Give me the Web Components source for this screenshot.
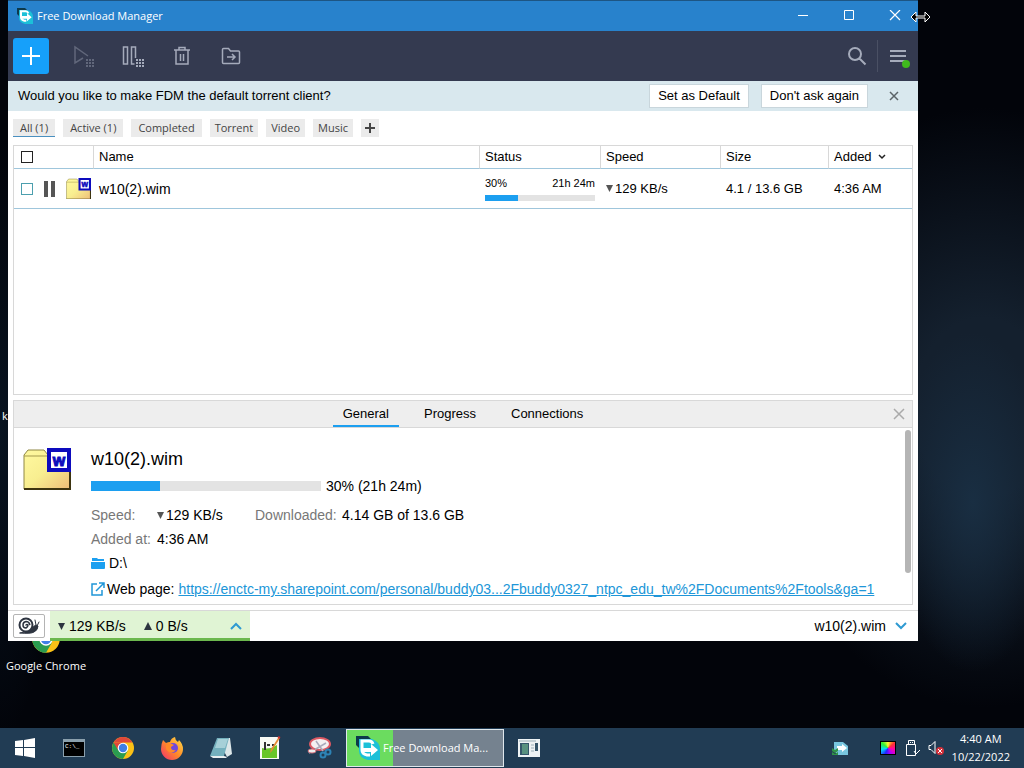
<!DOCTYPE html>
<html lang="en">
<head>
<meta charset="utf-8">
<meta name="viewport" content="width=device-width, initial-scale=1">
<title>Free Download Manager</title>
<style>
  body {
    display: flex;
    flex-direction: column;
    min-height: 100vh;
    margin: 0;
    background: #02040a;
    font: 13px/20px "Liberation Sans", Arial, sans-serif;
    color: #000;
  }
</style>
</head>
<body>
  <desk-top>
    <desktop-icon slot="icons" label="Google Chrome"></desktop-icon>
    <app-window>
      <title-bar>Free Download Manager</title-bar>
      <tool-bar></tool-bar>
      <app-banner>Would you like to make FDM the default torrent client?</app-banner>
      <filter-tabs></filter-tabs>
      <download-list></download-list>
      <details-panel></details-panel>
      <status-bar></status-bar>
    </app-window>
  </desk-top>
  <task-bar></task-bar>

<script>
const UI_FONT = '"Open Sans", "Noto Sans", sans-serif'

const base = `
  <style>
    *, :host { box-sizing: border-box; }
    button {
      display: inline-flex;
      align-items: center;
      justify-content: center;
      margin: 0;
      padding: 0;
      border: none;
      background: none;
      font: inherit;
      color: inherit;
    }
    svg { display: block; flex: none; }
    .arrow { display: inline-block; margin-right: 2px; vertical-align: 1px; fill: #555; }
    input[type=checkbox] {
      appearance: none;
      width: 12px;
      height: 12px;
      margin: 0;
      border: 1px solid #222;
      background: #fff;
    }
  </style>
`

const chrome = `
  <svg width="24" height="24" viewBox="0 0 24 24" aria-hidden="true">
    <circle cx="12" cy="12" r="11" fill="#fbc116"/>
    <path d="M12 12L2.500 6.500A11 11 0 0 0 12 23l4.700-8.300z" fill="#2a9c50"/>
    <path d="M12 6.500h9.500L17 14z" fill="#fbc116"/>
    <path d="M2.500 6.500A11 11 0 0 1 21.500 6.500H12z" fill="#e0483a"/>
    <path d="M2.500 6.500L7 14l5-7.500z" fill="#e0483a"/>
    <circle cx="12" cy="12" r="5.300" fill="#fff"/>
    <circle cx="12" cy="12" r="4.200" fill="#3f7fe6"/>
  </svg>
`

const fdm = size => `
  <svg width="${size}" height="${size}" viewBox="0 0 24 24" aria-hidden="true">
    <path d="M0 0h12l5 5v10H6l-6-6z" fill="#0d3a4c"/>
    <path d="M3 3h13q8 3 8 10v11H12q-9-2-9-9z" fill="#1cc0d8"/>
    <path d="M17 8q-1-3-4-3H6v9q0 4 5 5h3" fill="none" stroke="#fff" stroke-width="3"/>
    <path d="M7 12h8V8l7 6-7 6v-4H7z" fill="#fff"/>
  </svg>
`

const down = '<svg class="arrow" width="7" height="7" aria-hidden="true"><path d="M0 0h7L3.500 7z"/></svg>'
const up = '<svg class="arrow" width="8" height="8" aria-hidden="true"><path d="M0 8h8L4 0z"/></svg>'

class BaseElement extends HTMLElement {
  constructor() {
    super()
    this.attachShadow({ mode: 'open' })
    this.shadowRoot.innerHTML = base + this.render()
  }
}

customElements.define('desk-top', class extends BaseElement {
  render() {
    return `
      <style>
        :host {
          display: block;
          position: relative;
          flex: 1;
          min-height: 680px;
          overflow: hidden;
          background:
            radial-gradient(ellipse 80px 170px at 95% 69%, #192e42, transparent),
            radial-gradient(ellipse 230px 300px at 96% 56%, #14202e 30%, transparent),
            radial-gradient(ellipse 60px 300px at 0 60%, #081320, transparent),
            #02040a;
        }
        .cut {
          position: absolute;
          left: 2px;
          top: 408px;
          color: #fff;
          font: 11px/16px ${UI_FONT};
        }
        .cursor { position: absolute; right: 93px; top: 11px; }
      </style>
      <span class="cut">k</span>
      <slot name="icons"></slot>
      <slot></slot>
      <svg class="cursor" width="21" height="12" viewBox="0 0 21 12" aria-hidden="true">
        <path d="M1 6l5-5v4h9V1l5 5-5 5V7H6v4z" fill="#000" stroke="#fff"/>
      </svg>
    `
  }
})

customElements.define('desktop-icon', class extends BaseElement {
  render() {
    return `
      <style>
        :host {
          position: absolute;
          left: 0;
          bottom: 54px;
          display: flex;
          flex-direction: column;
          align-items: center;
          width: 92px;
          color: #fff;
          font: 11px/16px ${UI_FONT};
        }
        svg { width: 30px; height: 30px; margin-bottom: 4px; }
      </style>
      ${chrome}
      <span>${this.getAttribute('label')}</span>
    `
  }
})

customElements.define('app-window', class extends BaseElement {
  render() {
    return `
      <style>
        :host {
          position: absolute;
          inset: 0 106px 87px 8px;
          display: flex;
          flex-direction: column;
          background: #fff;
        }
      </style>
      <slot></slot>
    `
  }
})

customElements.define('title-bar', class extends BaseElement {
  render() {
    return `
      <style>
        :host {
          display: flex;
          align-items: center;
          height: 31px;
          padding-left: 9px;
          border-top: 1px solid #1d5583;
          background: #2882cc;
          color: #fff;
          font: 11px/20px ${UI_FONT};
        }
        .title { flex: 1; margin-left: 4px; }
        button { width: 46px; height: 30px; }
      </style>
      ${fdm(16)}
      <span class="title"><slot></slot></span>
      <button aria-label="Minimize"><svg width="12" height="12"><path d="M1 5.500h10" stroke="#fff"/></svg></button>
      <button aria-label="Maximize"><svg width="12" height="12"><path d="M1.500 .5h9v9h-9z" fill="none" stroke="#fff"/></svg></button>
      <button aria-label="Close"><svg width="12" height="12"><path d="M1 0l10 10M11 0L1 10" stroke="#fff" stroke-width="1.200"/></svg></button>
    `
  }
})

customElements.define('tool-bar', class extends BaseElement {
  render() {
    const dots = (x, y) => `<path d="M${x} ${y}h8M${x} ${y + 3}h8M${x} ${y + 6}h8" stroke-width="2" stroke-dasharray="2 1"/>`
    return `
      <style>
        :host {
          display: flex;
          align-items: center;
          height: 50px;
          padding-left: 5px;
          background: #343a50;
        }
        button { width: 49px; height: 36px; }
        svg { fill: none; stroke: #a5abbb; stroke-width: 1.500; }
        .add { width: 36px; margin-right: 10px; border-radius: 3px; background: #16a0fa; }
        .add svg { stroke: #fff; stroke-width: 2; }
        .off { opacity: .4; }
        .space { flex: 1; }
        .narrow { width: 40px; }
        .line { width: 1px; height: 32px; background: #4a5064; }
      </style>
      <button class="add" aria-label="Add download"><svg width="20" height="20"><path d="M10 1v18M1 10h18"/></svg></button>
      <button class="off" aria-label="Start all" disabled>
        <svg width="24" height="24"><path d="M11 14l-8 5V3l13 9"/>${dots(14, 16)}</svg>
      </button>
      <button aria-label="Pause all">
        <svg width="24" height="24"><path d="M2.500 3h4v17h-4zM14.500 14V3h-4v17h3"/>${dots(15, 16)}</svg>
      </button>
      <button aria-label="Delete">
        <svg width="18" height="20"><path d="M1 4h16M6 4V1.500h6V4M3 4v14h12V4M7.500 8v7M10.500 8v7"/></svg>
      </button>
      <button aria-label="Move to">
        <svg width="20" height="18"><path d="M1.500 15.500v-13q0-1 1-1h5l2 2.500h8q1 0 1 1v10.500q0 1-1 1h-15q-1 0-1-1zM6 10h8M11 7l3 3-3 3"/></svg>
      </button>
      <span class="space"></span>
      <button class="narrow" aria-label="Search">
        <svg width="20" height="20"><path d="M14 8A6 6 0 1 1 2 8a6 6 0 0 1 12 0zM12.500 12.500l6 6" stroke-width="2"/></svg>
      </button>
      <span class="line"></span>
      <button class="narrow" aria-label="Menu">
        <svg width="24" height="24"><path d="M4 7h16M4 12h16M4 17h16" stroke-width="2"/><circle cx="20" cy="20" r="4" fill="#3fb91c" stroke="none"/></svg>
      </button>
    `
  }
})

customElements.define('app-banner', class extends BaseElement {
  render() {
    return `
      <style>
        :host {
          display: flex;
          align-items: center;
          gap: 12px;
          height: 30px;
          padding-left: 10px;
          background: #d9e8ee;
        }
        .text { flex: 1; }
        button { height: 24px; padding: 0 8px; border: 1px solid #c9d6dc; background: #fff; }
        .close { width: 48px; margin-left: -10px; border: none; background: none; }
      </style>
      <span class="text"><slot></slot></span>
      <button>Set as Default</button>
      <button>Don't ask again</button>
      <button class="close" aria-label="Dismiss"><svg width="10" height="10"><path d="M1 1l8 8M9 1L1 9" stroke="#5c6468" stroke-width="1.500"/></svg></button>
    `
  }
})

customElements.define('filter-tabs', class extends BaseElement {
  render() {
    return `
      <style>
        :host {
          display: flex;
          gap: 8px;
          padding: 8px 5px;
          font: 11px/16px ${UI_FONT};
          color: #444;
        }
        button { height: 18px; padding: 0 7px; background: #ebebeb; }
        .tag { padding: 0 5px; }
        .tag svg { margin: 0 -1px; }
        .active { border-bottom: 1px solid #4a90c0; }
      </style>
      <button class="active">All (1)</button>
      <button>Active (1)</button>
      <button>Completed</button>
      <button class="tag">Torrent</button>
      <button class="tag">Video</button>
      <button class="tag">Music</button>
      <button class="tag" aria-label="Add tag"><svg width="10" height="10"><path d="M5 0v10M0 5h10" stroke="#444" stroke-width="2"/></svg></button>
    `
  }
})

customElements.define('progress-line', class extends BaseElement {
  render() {
    return `
      <style>
        :host { display: block; height: 6px; background: #e3e3e3; }
        div { width: ${this.getAttribute('value')}%; height: 100%; background: #1c9ff0; }
      </style>
      <div></div>
    `
  }
})

customElements.define('file-icon', class extends BaseElement {
  render() {
    return `
      <style>
        :host { display: block; width: 25px; }
        svg { width: 100%; height: auto; }
      </style>
      <svg viewBox="0 0 48 42" aria-hidden="true">
        <defs>
          <linearGradient id="paper" x1="0" y1="0" x2="1" y2="1">
            <stop offset="0" stop-color="#fff9a0"/>
            <stop offset=".5" stop-color="#f8ee90"/>
            <stop offset="1" stop-color="#eebd78"/>
          </linearGradient>
        </defs>
        <path d="M1 41V7l4-5h16l4 5h22v34z" fill="url(#paper)" stroke="#8f8744"/>
        <path d="M1 8h24" stroke="#a59b4e"/>
        <path d="M1 41h46V8" fill="none" stroke="#3d3410" stroke-width="2"/>
        <path d="M26 2h20v20H26z" fill="#fff" stroke="#0d0bbd" stroke-width="4"/>
        <text x="36" y="18" text-anchor="middle" font-family="Liberation Sans" font-weight="bold" font-size="16" fill="#0d0bbd" stroke="#0d0bbd">w</text>
      </svg>
    `
  }
})

customElements.define('download-list', class extends BaseElement {
  render() {
    return `
      <style>
        :host {
          display: block;
          flex: 1;
          min-height: 64px;
          margin: 0 5px 5px;
          border: 1px solid #d8d8d8;
        }
        table { width: 100%; table-layout: fixed; border-spacing: 0; }
        th {
          height: 23px;
          padding: 0 5px;
          border-left: 1px solid #d8d8d8;
          border-bottom: 1px solid #9fc6dc;
          font-weight: normal;
          text-align: left;
        }
        td { height: 40px; padding: 0 5px 0 6px; border-bottom: 1px solid #9fc6dc; }
        th:first-child { border-left: none; }
        th:first-child, td:first-child { padding: 0 0 0 7px; }
        th input { display: block; }
        .sort { display: inline-block; }
        .pick { display: flex; align-items: center; }
        .pick input { border-color: #4c9fae; }
        .pick .pause { margin: 0 11px 0 10px; }
        .name { font-size: 14px; }
        .labels { display: flex; justify-content: space-between; font-size: 11px; line-height: 16px; }
        .labels + progress-line { margin: 4px 0 2px; }
      </style>
      <table>
        <colgroup>
          <col style="width: 79px"><col><col style="width: 121px"><col style="width: 120px"><col style="width: 108px"><col style="width: 84px">
        </colgroup>
        <thead>
          <tr>
            <th><input type="checkbox" aria-label="Select all"></th>
            <th>Name</th>
            <th>Status</th>
            <th>Speed</th>
            <th>Size</th>
            <th>Added <svg class="sort" width="14" height="8"><path d="M4 2l3 3 3-3" fill="none" stroke="#222" stroke-width="1.500"/></svg></th>
          </tr>
        </thead>
        <tbody>
          <tr>
            <td>
              <div class="pick">
                <input type="checkbox" aria-label="Select w10(2).wim">
                <svg class="pause" width="12" height="16"><path d="M1 0h4v16H1zM8 0h4v16H8z" fill="#555"/></svg>
                <file-icon></file-icon>
              </div>
            </td>
            <td class="name">w10(2).wim</td>
            <td>
              <div class="labels"><span>30%</span><span>21h 24m</span></div>
              <progress-line value="30"></progress-line>
            </td>
            <td>${down}129 KB/s</td>
            <td>4.1 / 13.6 GB</td>
            <td>4:36 AM</td>
          </tr>
        </tbody>
      </table>
    `
  }
})

customElements.define('details-panel', class extends BaseElement {
  render() {
    return `
      <style>
        :host { display: block; margin: 0 5px 5px; border: 1px solid #d8d8d8; font-size: 14px; }
        nav {
          display: grid;
          grid-template-columns: 1fr auto 1fr;
          height: 27px;
          border-bottom: 1px solid #d8d8d8;
          background: #eee;
          font-size: 13px;
        }
        .tabs { display: flex; gap: 15px; grid-column: 2; }
        .tabs button { padding: 0 10px; border: solid transparent; border-width: 2px 0; }
        .tabs .active { border-bottom-color: #1c9ff0; }
        .close { justify-self: end; width: 26px; }
        .body { display: flex; padding: 2px 1px 5px 9px; }
        file-icon { width: 48px; margin: 18px 20px 0 0; }
        .info { flex: 1; min-width: 0; padding-top: 17px; }
        h2 { margin: 0 0 5px; font-size: 18px; font-weight: normal; line-height: 24px; }
        .row { display: flex; align-items: center; }
        .row progress-line { width: 230px; height: 10px; margin-right: 5px; }
        dl { display: grid; grid-template: 20px 20px / 66px 98px 87px 1fr; row-gap: 4px; margin: 9px 0 4px; }
        dt { color: #777; }
        dd { margin: 0; white-space: nowrap; }
        .folder { gap: 4px; margin-bottom: 6px; }
        .page { gap: 2px; white-space: nowrap; }
        a { margin-left: 2px; color: #2096d8; }
        .scroll { width: 6px; height: 143px; border-radius: 3px; background: #b5b5b5; }
      </style>
      <nav>
        <div class="tabs">
          <button class="active">General</button>
          <button>Progress</button>
          <button>Connections</button>
        </div>
        <button class="close" aria-label="Close details"><svg width="12" height="12"><path d="M1 1l10 10M11 1L1 11" stroke="#aaa" stroke-width="1.500"/></svg></button>
      </nav>
      <div class="body">
        <file-icon></file-icon>
        <div class="info">
          <h2>w10(2).wim</h2>
          <div class="row"><progress-line value="30"></progress-line>30% (21h 24m)</div>
          <dl>
            <dt>Speed:</dt><dd>${down}129 KB/s</dd>
            <dt>Downloaded:</dt><dd>4.14 GB of 13.6 GB</dd>
            <dt>Added at:</dt><dd>4:36 AM</dd>
          </dl>
          <div class="row folder">
            <svg width="14" height="12"><path d="M1 1h5l1 1h6v2H1zM0 5h14v6q0 1-1 1H1q-1 0-1-1z" fill="#1c9ff0"/></svg>
            D:\\
          </div>
          <div class="row page">
            <svg width="14" height="14"><path d="M6 2H1v11h10V8M8 1h5v5M13 1L5 9" fill="none" stroke="#2096d8" stroke-width="1.500"/></svg>
            Web page:
            <a href="#">https://enctc-my.sharepoint.com/personal/buddy03...2Fbuddy0327_ntpc_edu_tw%2FDocuments%2Ftools&amp;ga=1</a>
          </div>
        </div>
        <div class="scroll"></div>
      </div>
    `
  }
})

customElements.define('status-bar', class extends BaseElement {
  render() {
    return `
      <style>
        :host {
          display: flex;
          align-items: center;
          height: 31px;
          padding: 0 10px 0 5px;
          border-top: 1px solid #d8d8d8;
          font-size: 14px;
        }
        .snail { width: 32px; height: 24px; margin-right: 5px; border: 1px solid #b4b4b4; border-radius: 2px; }
        .speed {
          justify-content: flex-start;
          width: 200px;
          height: 30px;
          padding: 3px 8px 0;
          border-bottom: 3px solid #6cb84e;
          background: #e0f4d4;
        }
        .speed span:nth-of-type(2) { flex: 1; margin-left: 18px; text-align: left; }
        .arrow { margin-right: 4px; fill: #2d3440; }
        .file { gap: 8px; margin-left: auto; }
      </style>
      <button class="snail" aria-label="Snail mode">
        <svg width="22" height="18" fill="none" stroke="#2d3440" stroke-linecap="round">
          <path d="M2 16q8-1 12-4 1-3 4-4l2 1q0 4-4 6-3 2-14 1z" fill="#2d3440"/>
          <path d="M18 8l-1-5M19 9l2-4"/>
          <circle cx="8" cy="8" r="6.500" fill="#fff" stroke-width="2"/>
          <path d="M8 8q1-1 2 0 0 2-2 3-3 0-3-3 0-3 3-3.500 3 0 3.800 3" stroke-width="1.500"/>
        </svg>
      </button>
      <button class="speed">
        <span>${down}129 KB/s</span>
        <span>${up}0 B/s</span>
        <svg width="12" height="8"><path d="M1 7l5-5 5 5" fill="none" stroke="#2f9ad2" stroke-width="2"/></svg>
      </button>
      <button class="file">
        w10(2).wim
        <svg width="14" height="8"><path d="M2 1l5 5 5-5" fill="none" stroke="#2f9ad2" stroke-width="2"/></svg>
      </button>
    `
  }
})

customElements.define('task-bar', class extends BaseElement {
  render() {
    return `
      <style>
        :host {
          display: flex;
          align-items: center;
          height: 40px;
          padding-right: 14px;
          background: #213c54;
          color: #fff;
          font: 11px/18px ${UI_FONT};
        }
        button { width: 49px; height: 40px; }
        .open {
          justify-content: flex-start;
          gap: 3px;
          width: 158px;
          height: 38px;
          margin-left: 3px;
          padding-left: 9px;
          border: 1px solid #dfe7ec;
          background: linear-gradient(90deg, #6bdc5f 46px, #75828f 46px);
          white-space: nowrap;
        }
        .tray { display: flex; align-items: center; gap: 8px; margin-left: auto; }
        .tray svg:first-child { margin-right: 24px; }
        .hue {
          width: 16px;
          height: 14px;
          border: 1px solid #000;
          background: conic-gradient(#f33, #f0f, #22f, #0df, #3e3, #ff3, #f33);
          background: conic-gradient(#ff3, #f33, #f0a, #a0f, #22f, #0df, #3e3, #ff3);
        }
        time { text-align: center; }
        time span { display: block; }
      </style>
      <button aria-label="Start"><svg width="22" height="22"><path d="M1 4l8-1v7H1zM10 3l11-2v9H10zM1 11h8v8l-8-1zM10 11h11v10l-11-2z" fill="#fff"/></svg></button>
      <button aria-label="Command Prompt"><svg width="22" height="20"><path d="M0 1h22v18H0z" fill="#8ba0ad"/><path d="M1 4h20v14H1z" fill="#000"/><text x="2" y="10" font-family="Liberation Mono" font-size="6" fill="#fff">C:\\_</text></svg></button>
      <button aria-label="Google Chrome">${chrome}</button>
      <button aria-label="Firefox">
        <svg width="24" height="24">
          <defs><linearGradient id="fox" x1="1" y1="0" x2="0" y2="1"><stop offset="0" stop-color="#ffe04a"/><stop offset=".5" stop-color="#ff8a28"/><stop offset="1" stop-color="#f02c72"/></linearGradient></defs>
          <path d="M3 4l3 3q2-1 4-1 1-4 5-5 0 3 3 5l1-2q4 4 4 9a11 11 0 0 1-22 0q0-5 2-9z" fill="url(#fox)"/>
          <circle cx="13" cy="12" r="5" fill="#7048dc"/>
          <path d="M6 9q4-3 8 0l-3 2q0 4 5 3-3 4-7 2-4-2-3-7z" fill="#ff8a28"/>
        </svg>
      </button>
      <button aria-label="Notepad">
        <svg width="24" height="24"><path d="M8 2h13l2 16-5 3z" fill="#dce7e9"/><path d="M8 2h12l-5 18H1z" fill="#74b0bd"/><path d="M9 3h10l-3 9H6z" fill="#a6d0d8"/><path d="M1 20h14l3 1-1 1H4z" fill="#e9eff0"/></svg>
      </button>
      <button aria-label="Notepad++">
        <svg width="24" height="24"><path d="M2 1h19v22H2z" fill="#f8faf5"/><path d="M4 12q8 2 15-3v13H4z" fill="#68c629"/><path d="M7 6v8M9 9h3M14 9h2" stroke="#333" stroke-width="2"/><path d="M22 2l-8 13-2 2 1-4 7-11z" fill="#e48b35"/><path d="M22 2l-2-1" stroke="#c33" stroke-width="2"/></svg>
      </button>
      <button aria-label="Snipping Tool">
        <svg width="26" height="24"><ellipse cx="14" cy="8" rx="10" ry="6" fill="#f4f1f2" stroke="#dc5963" stroke-width="2"/><path d="M3 17l17-10M10 5l7 10" stroke="#aab" stroke-width="1.500"/><ellipse cx="6" cy="15" rx="4" ry="2" fill="#eee" stroke="#d5707c"/><circle cx="17" cy="19" r="2.500" fill="none" stroke="#2d83b5" stroke-width="2"/><circle cx="22" cy="16" r="2.500" fill="none" stroke="#2d83b5" stroke-width="2"/></svg>
      </button>
      <button class="open">${fdm(24)}Free Download Ma...</button>
      <button aria-label="Window"><svg width="22" height="18"><path d="M0 0h22v18H0z" fill="#eef3f4"/><path d="M2 4h9v12H2z" fill="#35566a"/><path d="M4 5h6v10H4z" fill="#58917f"/><path d="M13 6h3M13 9h3M13 12h3M1 2h17" stroke="#9cb0b8"/><path d="M17 4h3v8h-3z" fill="#35566a"/></svg></button>
      <div class="tray">
        <svg width="16" height="16"><path d="M2 2h9l5 4v9H6L2 11z" fill="#78c6df"/><path d="M5 6h5V4l5 4-5 4v-2H5z" fill="#fff"/><path d="M0 8l3 2 3-2v3l-3 2-3-2zM0 12l3 2 3-2v3H0z" fill="#309348"/></svg>
        <span class="hue"></span>
        <svg width="16" height="18" fill="none" stroke="#fff"><path d="M4.500 5.500v-4h6v4M2.500 5.500h9v11h-9zM6 3.500h1M8 3.500h1M10 12l2 3 4-4"/></svg>
        <svg width="16" height="16"><path d="M1 5.500h2l4-4v12l-4-4H1z" fill="none" stroke="#fff"/><circle cx="12" cy="11" r="4" fill="#d3303a"/><path d="M10 9l4 4M14 9l-4 4" stroke="#fff"/></svg>
        <time datetime="2022-10-22T04:40"><span>4:40 AM</span><span>10/22/2022</span></time>
      </div>
    `
  }
})
</script>
</body>
</html>
